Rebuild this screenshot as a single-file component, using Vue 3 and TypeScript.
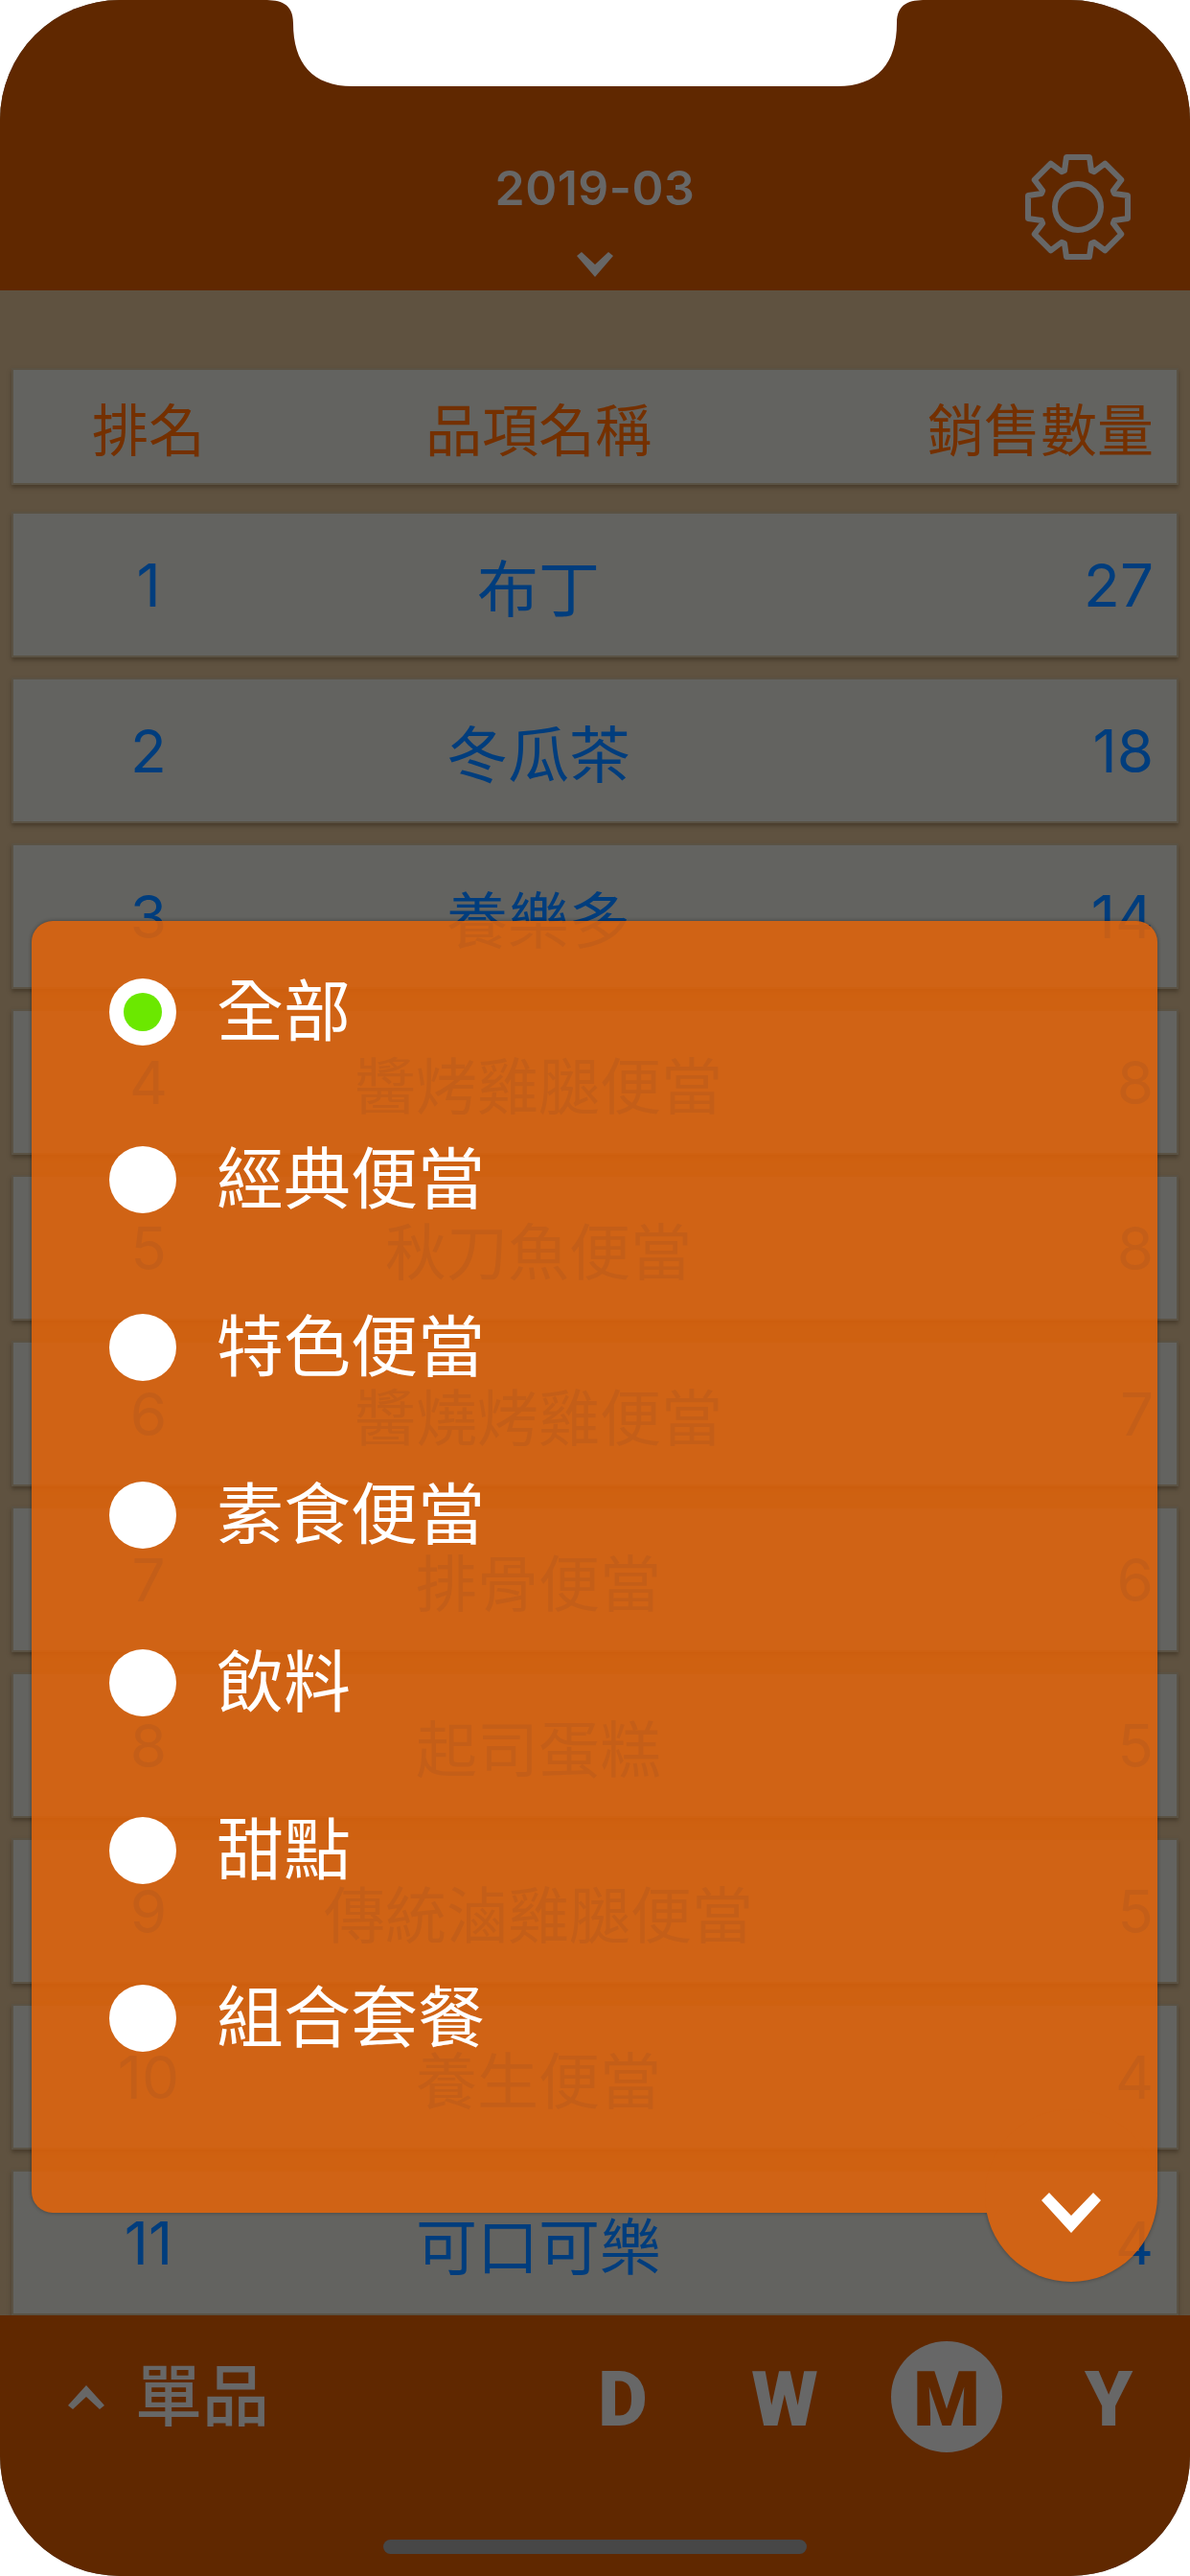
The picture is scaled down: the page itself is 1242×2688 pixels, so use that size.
<script setup lang="ts">
import { computed } from 'vue'

interface Row { rank: number; name: string; qty: number }

const rows: Row[] = [
  { rank: 1, name: '布丁', qty: 27 },
  { rank: 2, name: '冬瓜茶', qty: 18 },
  { rank: 3, name: '養樂多', qty: 14 },
  { rank: 4, name: '醬烤雞腿便當', qty: 8 },
  { rank: 5, name: '秋刀魚便當', qty: 8 },
  { rank: 6, name: '醬燒烤雞便當', qty: 7 },
  { rank: 7, name: '排骨便當', qty: 6 },
  { rank: 8, name: '起司蛋糕', qty: 5 },
  { rank: 9, name: '傳統滷雞腿便當', qty: 5 },
  { rank: 10, name: '養生便當', qty: 4 },
  { rank: 11, name: '可口可樂', qty: 4 },
]

const categories = ['全部', '經典便當', '特色便當', '素食便當', '飲料', '甜點', '組合套餐']
const periods = ['D', 'W', 'M', 'Y']
const activePeriod = 'M'

const gearPath = computed(() => {
  const teeth = 8
  const pts: string[] = []
  const outer = 52
  const inner = 38
  for (let i = 0; i < teeth; i++) {
    const a = (i * Math.PI * 2) / teeth - Math.PI / 2
    const ux = Math.cos(a), uy = Math.sin(a)
    const vx = -uy, vy = ux
    const hw = 12
    const hb = 14
    const p = [
      [inner * ux - hb * vx, inner * uy - hb * vy],
      [outer * ux - hw * vx, outer * uy - hw * vy],
      [outer * ux + hw * vx, outer * uy + hw * vy],
      [inner * ux + hb * vx, inner * uy + hb * vy],
    ]
    p.forEach(([x, y]) => pts.push(`${(x + 55).toFixed(1)} ${(y + 55).toFixed(1)}`))
  }
  return 'M' + pts.join('L') + 'Z'
})
</script>

<template>
  <div class="phone">
    <svg class="notch" width="690" height="90" viewBox="0 0 690 90">
      <path d="M0 0H690C674 0 660 3 660 24C660 66 640 90 598 90H92C50 90 30 66 30 24C30 3 16 0 0 0Z" fill="#fff" />
    </svg>

    <header class="top">
      <div></div>
      <div class="date-block">
        <div class="date">2019-03</div>
        <svg class="date-chevron" width="38" height="26" viewBox="0 0 38 26">
          <path d="M0 4 L5 0 L19 13 L33 0 L38 4 L19 26Z" fill="#676767" />
        </svg>
      </div>
      <svg class="gear" width="110" height="110" viewBox="0 0 110 110" fill="none" stroke="#676767" stroke-width="6" stroke-linejoin="round">
        <path :d="gearPath" />
        <circle cx="55" cy="55" r="24" />
      </svg>
    </header>

    <main class="list">
      <div class="row head">
        <div class="rank">排名</div>
        <div class="name">品項名稱</div>
        <div class="qty">銷售數量</div>
      </div>
      <div v-for="r in rows" :key="r.rank" class="row item">
        <div class="rank">{{ r.rank }}</div>
        <div class="name">{{ r.name }}</div>
        <div class="qty">{{ r.qty }}</div>
      </div>
    </main>

    <footer class="bar">
      <div class="bar-row">
        <div class="scope">
          <svg width="38" height="25" viewBox="0 0 38 25">
            <path d="M0 21 L19 0 L38 21 L33 25 L19 12 L5 25Z" fill="#676767" />
          </svg>
          <span class="scope-label">單品</span>
        </div>
        <div class="periods">
          <div v-for="p in periods" :key="p" class="period" :class="{ active: p === activePeriod }">{{ p }}</div>
        </div>
      </div>
      <div class="home"></div>
    </footer>

    <section class="sheet">
      <div class="sheet-bg">
        <div class="sheet-fill"></div>
        <div class="sheet-fab"></div>
      </div>
      <ul class="cats">
        <li v-for="(c, i) in categories" :key="c" class="cat">
          <span class="radio"><span v-if="i === 0" class="dot"></span></span>
          <span class="cat-label">{{ c }}</span>
        </li>
      </ul>
      <svg class="sheet-chevron" width="62" height="42" viewBox="0 0 62 42">
        <path d="M0 8 L8 0 L31 24 L54 0 L62 8 L31 42Z" fill="#fff" />
      </svg>
    </section>
  </div>
</template>

<style>
html, body { margin: 0; background: #fff; }
</style>

<style scoped>
.phone {
  position: relative;
  width: 1242px;
  height: 2688px;
  border-radius: 125px;
  overflow: hidden;
  display: flex;
  flex-direction: column;
  background: #5f5240;
  font-family: Inter, "Noto Sans CJK TC", sans-serif;
}
.notch { position: absolute; top: 0; left: 276px; }

.top {
  height: 303px;
  box-sizing: border-box;
  padding: 161px 62px 0;
  background: #602800;
  display: grid;
  grid-template-columns: 1fr auto 1fr;
  flex: none;
}
.date-block { display: flex; flex-direction: column; align-items: center; }
.date { font-size: 50px; line-height: 70px; font-weight: 600; color: #676767; letter-spacing: 0.5px; }
.date-chevron { margin-top: 32px; }
.gear { justify-self: end; }

.list {
  flex: 1;
  min-height: 0;
  overflow: hidden;
  box-sizing: border-box;
  padding: 81px 12px 0;
  display: flex;
  flex-direction: column;
  gap: 21px;
}
.row {
  flex: none;
  display: grid;
  grid-template-columns: 282px 532px 1fr;
  align-items: center;
  box-sizing: border-box;
  padding-right: 24px;
  background: #636360;
  border: 2px solid #5a5244;
  box-shadow: 0 3px 4px rgba(50, 40, 25, 0.5);
  text-align: center;
}
.head { height: 122px; margin-bottom: 7px; font-size: 59px; color: #743000; }
.item { height: 152px; font-size: 64px; color: #003d7d; }
.item .rank, .item .qty { font-size: 62px; }
.qty { text-align: right; white-space: nowrap; }
.name { white-space: nowrap; }

.bar { flex: none; height: 272px; box-sizing: border-box; padding-top: 27px; background: #602800; display: flex; flex-direction: column; }
.bar-row { display: flex; justify-content: space-between; align-items: center; height: 116px; padding: 0 27px 0 71px; }
.scope { display: flex; align-items: center; gap: 32px; color: #676767; }
.scope-label { font-size: 70px; font-weight: 500; line-height: 116px; }
.periods { display: flex; gap: 53px; }
.period {
  width: 116px; height: 116px; border-radius: 50%;
  display: flex; align-items: center; justify-content: center;
  font-family: Roboto, sans-serif;
  font-size: 80px; font-weight: 900; color: #676767; padding-top: 6px; box-sizing: border-box;
}
.period.active { background: #676767; color: #602800; }
.home { align-self: center; margin-top: 91px; width: 442px; height: 15px; border-radius: 8px; background: #474747; }

.sheet {
  position: absolute;
  left: 33px; top: 961px;
  width: 1175px; height: 1348px;
}
.sheet-bg { position: absolute; inset: 0; opacity: 0.88; filter: drop-shadow(0 0 2px rgba(0,0,0,.4)); }
.sheet-fill { position: absolute; inset: 0; border-radius: 22px; background: #e0630b; }
.sheet-fab { position: absolute; right: 0; bottom: -72px; width: 180px; height: 180px; border-radius: 50%; background: #e0630b; }
.cats { position: relative; list-style: none; margin: 0; padding: 60px 0 0 81px; display: flex; flex-direction: column; gap: 105px; }
.cat { display: flex; align-items: center; gap: 42px; height: 70px; }
.radio { width: 70px; height: 70px; border-radius: 50%; background: #fff; display: flex; align-items: center; justify-content: center; flex: none; }
.dot { width: 40px; height: 40px; border-radius: 50%; background: #6be800; }
.cat-label { font-size: 70px; line-height: 70px; color: #fff; white-space: nowrap; }
.sheet-chevron { position: absolute; left: 1054px; top: 1327px; }
</style>
